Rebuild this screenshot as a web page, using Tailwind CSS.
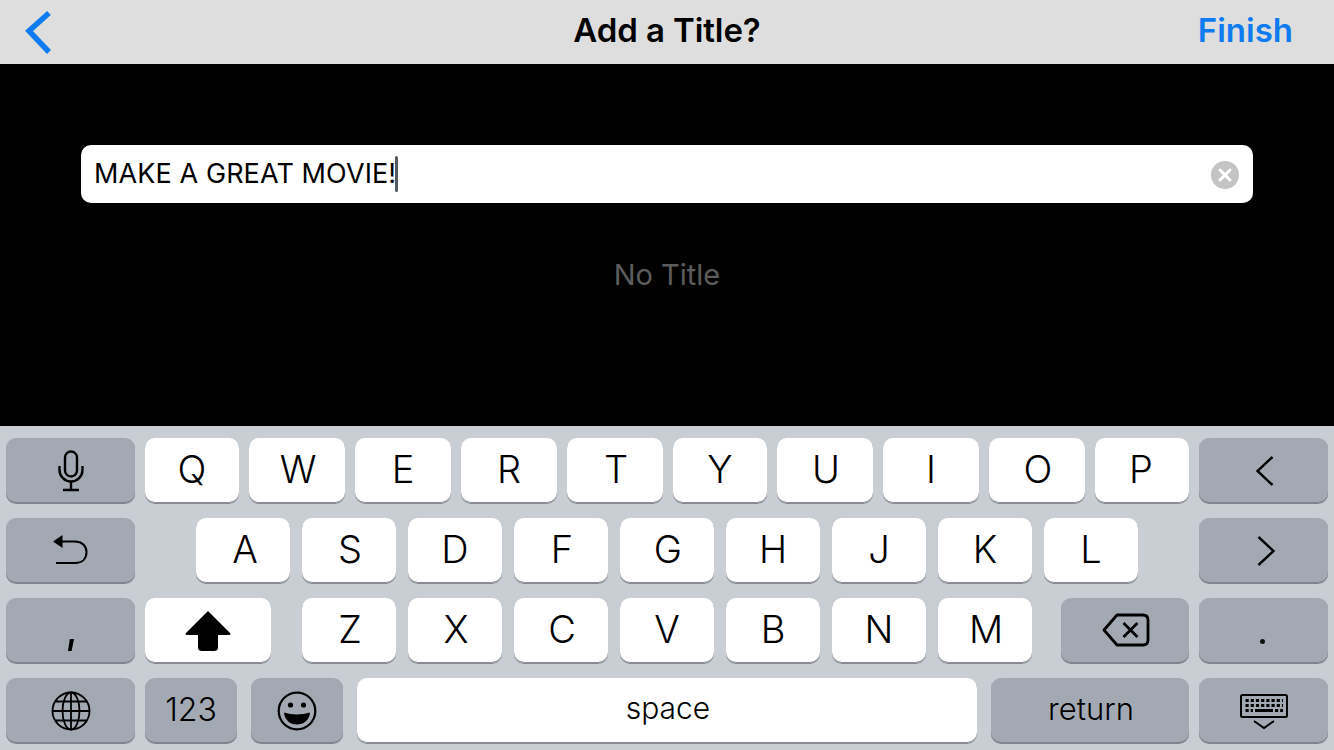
<!DOCTYPE html>
<html>
<head>
<meta charset="utf-8">
<script src="https://cdn.jsdelivr.net/npm/@tailwindcss/browser@4"></script>
</head>
<body class="m-0 bg-black">
<div class="w-[1334px] h-[750px] flex flex-col overflow-hidden font-['Inter','Liberation_Sans',sans-serif] text-black">
  <header class="h-[64px] shrink-0 bg-[#dedede] grid grid-cols-[1fr_auto_1fr] items-center px-[41px]">
    <svg width="28" height="44" viewBox="0 0 28 44" class="shrink-0 -ml-[17px]"><path d="M25 5 L5 23 L25 44" transform="translate(0 -2)" fill="none" stroke="#0f7bf0" stroke-width="5.5"/></svg>
    <h1 class="text-[33px] font-semibold tracking-[-0.1px] leading-none pb-[4px]">Add a Title?</h1>
    <span class="justify-self-end text-[33px] font-[580] text-[#0f7bf0] leading-none pb-[4px]">Finish</span>
  </header>
  <main class="flex-1 bg-black pt-[81px] px-[81px] flex flex-col items-stretch">
    <div class="h-[58px] bg-white rounded-[10px] flex items-center justify-between pl-[13px] pr-[14px]">
      <div class="flex items-center">
        <span class="text-[27px] font-[370] leading-none tracking-[0.1px] pb-[2px]">MAKE A GREAT MOVIE!</span>
        <span class="w-[3px] h-[36px] bg-[#555a60] rounded-sm -ml-[1px]"></span>
      </div>
      <svg width="28" height="28" viewBox="0 0 28 28" class="mt-[2px]"><circle cx="14" cy="14" r="14" fill="#c4c4c4"/><path d="M9 9 L19 19 M19 9 L9 19" stroke="#fff" stroke-width="3" stroke-linecap="round"/></svg>
    </div>
    <p class="mt-[54px] text-center text-[29px] font-[380] leading-[36px] text-[#5c5c5c]">No Title</p>
  </main>
  <section class="h-[324px] shrink-0 bg-[#c9cdd4] px-[6px] pt-[12px] flex flex-col gap-[15px] text-[38px] font-[365]">
    <div class="flex h-[65px] gap-[10px]">
      <div class="w-[129px] h-[65px] rounded-[10px] bg-[#a3a9b3] shadow-[inset_0_-1px_0_#80848c,0_1px_0_#80848c] flex items-center justify-center">
        <svg width="26" height="42" viewBox="0 0 26 42" fill="none" stroke="#000" stroke-width="2.4"><rect x="7" y="1.5" width="12" height="25" rx="6"/><path d="M1.5 16 v4 a11.5 11.5 0 0 0 23 0 v-4 M13 32 v7 M5 40 h16" /></svg>
      </div>
      <div class="w-[94px] h-[65px] rounded-[10px] bg-white shadow-[inset_0_-1px_0_#888b91,0_1px_0_#888b91] flex items-center justify-center pb-[3px]">Q</div>
      <div class="w-[96px] h-[65px] rounded-[10px] bg-white shadow-[inset_0_-1px_0_#888b91,0_1px_0_#888b91] flex items-center justify-center pb-[3px] pl-[2px]">W</div>
      <div class="w-[96px] h-[65px] rounded-[10px] bg-white shadow-[inset_0_-1px_0_#888b91,0_1px_0_#888b91] flex items-center justify-center pb-[3px]">E</div>
      <div class="w-[96px] h-[65px] rounded-[10px] bg-white shadow-[inset_0_-1px_0_#888b91,0_1px_0_#888b91] flex items-center justify-center pb-[3px]">R</div>
      <div class="w-[96px] h-[65px] rounded-[10px] bg-white shadow-[inset_0_-1px_0_#888b91,0_1px_0_#888b91] flex items-center justify-center pb-[3px] pl-[2px]">T</div>
      <div class="w-[94px] h-[65px] rounded-[10px] bg-white shadow-[inset_0_-1px_0_#888b91,0_1px_0_#888b91] flex items-center justify-center pb-[3px]">Y</div>
      <div class="w-[96px] h-[65px] rounded-[10px] bg-white shadow-[inset_0_-1px_0_#888b91,0_1px_0_#888b91] flex items-center justify-center pb-[3px] pl-[2px]">U</div>
      <div class="w-[96px] h-[65px] rounded-[10px] bg-white shadow-[inset_0_-1px_0_#888b91,0_1px_0_#888b91] flex items-center justify-center pb-[3px]">I</div>
      <div class="w-[96px] h-[65px] rounded-[10px] bg-white shadow-[inset_0_-1px_0_#888b91,0_1px_0_#888b91] flex items-center justify-center pb-[3px] pl-[2px]">O</div>
      <div class="w-[94px] h-[65px] rounded-[10px] bg-white shadow-[inset_0_-1px_0_#888b91,0_1px_0_#888b91] flex items-center justify-center pb-[3px] pr-[2px]">P</div>
      <div class="w-[129px] h-[65px] rounded-[10px] bg-[#a3a9b3] shadow-[inset_0_-1px_0_#80848c,0_1px_0_#80848c] flex items-center justify-center pl-[2px]">
        <svg width="20" height="32" viewBox="0 0 20 32" fill="none" stroke="#000" stroke-width="2.4"><path d="M17.5 2 L2.5 16 L17.5 30"/></svg>
      </div>
    </div>
    <div class="flex h-[65px]">
      <div class="w-[129px] h-[65px] rounded-[10px] bg-[#a3a9b3] shadow-[inset_0_-1px_0_#80848c,0_1px_0_#80848c] flex items-center justify-center pb-[4px]">
        <svg width="36" height="32" viewBox="0 0 36 32" fill="none" stroke="#000" stroke-width="2"><path d="M6 8.5 H22 C29 8.5 33.5 13 33.5 19 C33.5 26 29 30 22 30 H3"/><path d="M0 8.5 L9.5 2 V15 Z" fill="#000" stroke="none"/></svg>
      </div>
      <div class="ml-[61px] flex gap-[12px]">
        <div class="w-[94px] h-[65px] rounded-[10px] bg-white shadow-[inset_0_-1px_0_#888b91,0_1px_0_#888b91] flex items-center justify-center pb-[3px] pl-[4px]">A</div>
        <div class="w-[94px] h-[65px] rounded-[10px] bg-white shadow-[inset_0_-1px_0_#888b91,0_1px_0_#888b91] flex items-center justify-center pb-[3px] pl-[2px]">S</div>
        <div class="w-[94px] h-[65px] rounded-[10px] bg-white shadow-[inset_0_-1px_0_#888b91,0_1px_0_#888b91] flex items-center justify-center pb-[3px]">D</div>
        <div class="w-[94px] h-[65px] rounded-[10px] bg-white shadow-[inset_0_-1px_0_#888b91,0_1px_0_#888b91] flex items-center justify-center pb-[3px] pl-[2px]">F</div>
        <div class="w-[94px] h-[65px] rounded-[10px] bg-white shadow-[inset_0_-1px_0_#888b91,0_1px_0_#888b91] flex items-center justify-center pb-[3px] pl-[2px]">G</div>
        <div class="w-[94px] h-[65px] rounded-[10px] bg-white shadow-[inset_0_-1px_0_#888b91,0_1px_0_#888b91] flex items-center justify-center pb-[3px]">H</div>
        <div class="w-[94px] h-[65px] rounded-[10px] bg-white shadow-[inset_0_-1px_0_#888b91,0_1px_0_#888b91] flex items-center justify-center pb-[3px]">J</div>
        <div class="w-[94px] h-[65px] rounded-[10px] bg-white shadow-[inset_0_-1px_0_#888b91,0_1px_0_#888b91] flex items-center justify-center pb-[3px]">K</div>
        <div class="w-[94px] h-[65px] rounded-[10px] bg-white shadow-[inset_0_-1px_0_#888b91,0_1px_0_#888b91] flex items-center justify-center pb-[3px]">L</div>
      </div>
      <div class="ml-auto w-[129px] h-[65px] rounded-[10px] bg-[#a3a9b3] shadow-[inset_0_-1px_0_#80848c,0_1px_0_#80848c] flex items-center justify-center pl-[4px]">
        <svg width="20" height="32" viewBox="0 0 20 32" fill="none" stroke="#000" stroke-width="2.4"><path d="M2.5 2 L17.5 16 L2.5 30"/></svg>
      </div>
    </div>
    <div class="flex h-[65px]">
      <div class="w-[129px] h-[65px] rounded-[10px] bg-[#a3a9b3] shadow-[inset_0_-1px_0_#80848c,0_1px_0_#80848c] flex items-end justify-center pb-[12px]">
        <svg width="6" height="12" viewBox="0 0 6 12"><path d="M1.8 0 H6 L3.6 12 H0 Z" fill="#000"/></svg>
      </div>
      <div class="ml-[10px] w-[126px] h-[65px] rounded-[10px] bg-white shadow-[inset_0_-1px_0_#888b91,0_1px_0_#888b91] flex items-center justify-center">
        <svg width="46" height="40" viewBox="0 0 46 40"><path d="M23 0 L45 22 C46 23 45.5 24 44 24 H33 V36 C33 39 31.5 40 29 40 H17 C14.5 40 13 39 13 36 V24 H2 C0.5 24 0 23 1 22 Z" fill="#000"/></svg>
      </div>
      <div class="ml-[31px] flex gap-[12px]">
        <div class="w-[94px] h-[65px] rounded-[10px] bg-white shadow-[inset_0_-1px_0_#888b91,0_1px_0_#888b91] flex items-center justify-center pb-[3px] pl-[2px]">Z</div>
        <div class="w-[94px] h-[65px] rounded-[10px] bg-white shadow-[inset_0_-1px_0_#888b91,0_1px_0_#888b91] flex items-center justify-center pb-[3px] pl-[2px]">X</div>
        <div class="w-[94px] h-[65px] rounded-[10px] bg-white shadow-[inset_0_-1px_0_#888b91,0_1px_0_#888b91] flex items-center justify-center pb-[3px] pl-[2px]">C</div>
        <div class="w-[94px] h-[65px] rounded-[10px] bg-white shadow-[inset_0_-1px_0_#888b91,0_1px_0_#888b91] flex items-center justify-center pb-[3px]">V</div>
        <div class="w-[94px] h-[65px] rounded-[10px] bg-white shadow-[inset_0_-1px_0_#888b91,0_1px_0_#888b91] flex items-center justify-center pb-[3px]">B</div>
        <div class="w-[94px] h-[65px] rounded-[10px] bg-white shadow-[inset_0_-1px_0_#888b91,0_1px_0_#888b91] flex items-center justify-center pb-[3px]">N</div>
        <div class="w-[94px] h-[65px] rounded-[10px] bg-white shadow-[inset_0_-1px_0_#888b91,0_1px_0_#888b91] flex items-center justify-center pb-[3px] pl-[2px]">M</div>
      </div>
      <div class="ml-[29px] w-[128px] h-[65px] rounded-[10px] bg-[#a3a9b3] shadow-[inset_0_-1px_0_#80848c,0_1px_0_#80848c] flex items-center justify-center pl-[1px] pb-[2px]">
        <svg width="48" height="34" viewBox="0 0 48 34" fill="none" stroke="#000" stroke-width="2.8"><path d="M15 2 H41 C44.5 2 46 3.5 46 7 V27 C46 30.5 44.5 32 41 32 H15 L2 17 Z" stroke-linejoin="round"/><path d="M21.5 10 L35.5 24 M35.5 10 L21.5 24"/></svg>
      </div>
      <div class="ml-[10px] w-[129px] h-[65px] rounded-[10px] bg-[#a3a9b3] shadow-[inset_0_-1px_0_#80848c,0_1px_0_#80848c] flex items-end justify-center pb-[19px] pr-[3px]">
        <span class="w-[5px] h-[5px] rounded-full bg-black/90"></span>
      </div>
    </div>
    <div class="flex h-[65px]">
      <div class="w-[129px] h-[65px] rounded-[10px] bg-[#a3a9b3] shadow-[inset_0_-1px_0_#80848c,0_1px_0_#80848c] flex items-center justify-center">
        <svg width="40" height="40" viewBox="0 0 40 40" fill="none" stroke="#000" stroke-width="1.8"><circle cx="20" cy="20" r="18.5"/><ellipse cx="20" cy="20" rx="8.5" ry="18.5"/><path d="M20 1.5 V38.5 M1.5 20 H38.5 M4.5 10.5 H35.5 M4.5 29.5 H35.5"/></svg>
      </div>
      <div class="ml-[10px] w-[92px] h-[65px] rounded-[10px] bg-[#a3a9b3] shadow-[inset_0_-1px_0_#80848c,0_1px_0_#80848c] flex items-center justify-center text-[32px] leading-none pb-[1px]">123</div>
      <div class="ml-[14px] w-[92px] h-[65px] rounded-[10px] bg-[#a3a9b3] shadow-[inset_0_-1px_0_#80848c,0_1px_0_#80848c] flex items-center justify-center">
        <svg width="40" height="40" viewBox="0 0 40 40"><circle cx="20" cy="20" r="18.3" fill="none" stroke="#000" stroke-width="2.2"/><circle cx="13.5" cy="14" r="2.6" fill="#000"/><circle cx="26.5" cy="14" r="2.6" fill="#000"/><path d="M7 21.5 C15 24 25 24 33 21.5 C32.5 29 27 33.5 20 33.5 C13 33.5 7.5 29 7 21.5 Z" fill="#000"/></svg>
      </div>
      <div class="ml-[14px] w-[620px] h-[65px] rounded-[10px] bg-white shadow-[inset_0_-1px_0_#888b91,0_1px_0_#888b91] flex items-center justify-center text-[30px] leading-none pb-[5px] pl-[2px]">space</div>
      <div class="ml-[14px] w-[198px] h-[65px] rounded-[10px] bg-[#a3a9b3] shadow-[inset_0_-1px_0_#80848c,0_1px_0_#80848c] flex items-center justify-center text-[31px] leading-none pb-[5px] pl-[2px]">return</div>
      <div class="ml-[10px] w-[129px] h-[65px] rounded-[10px] bg-[#a3a9b3] shadow-[inset_0_-1px_0_#80848c,0_1px_0_#80848c] flex items-center justify-center pt-[3px]">
        <svg width="48" height="36" viewBox="0 0 48 36" fill="none" stroke="#000"><rect x="1" y="1" width="46" height="22" rx="1.5" stroke-width="2"/><path d="M5.5 6.5 H43 M5.5 11.5 H43" stroke-width="3" stroke-dasharray="3.2 2"/><path d="M5.5 16.5 H13 M35 16.5 H43" stroke-width="3" stroke-dasharray="3.2 2"/><path d="M15 16.5 H33" stroke-width="3"/><path d="M14 27 L24 34 L34 27" stroke-width="2"/></svg>
      </div>
    </div>
  </section>
</div>
</body>
</html>
